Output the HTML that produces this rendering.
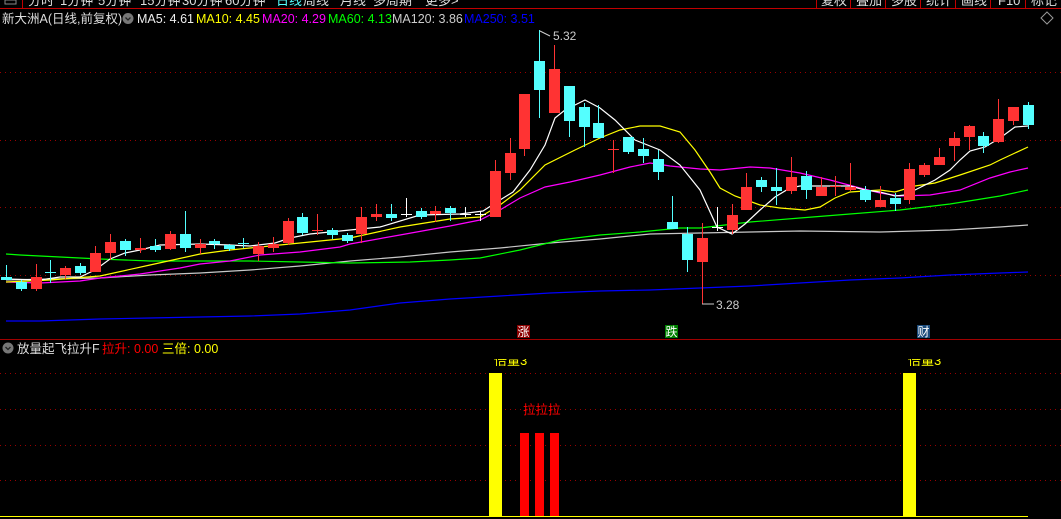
<!DOCTYPE html>
<html><head><meta charset="utf-8"><style>
html,body{margin:0;padding:0;background:#000;width:1061px;height:519px;overflow:hidden}
svg{display:block}
text{font-family:"Liberation Sans","Noto Sans CJK SC",sans-serif}
</style></head><body>
<svg width="1061" height="519" viewBox="0 0 1061 519" xmlns="http://www.w3.org/2000/svg">
<rect width="1061" height="519" fill="#000"/>
<!-- top menu -->
<g font-size="13" fill="#ddd">
<text x="28" y="5">分时</text><text x="60" y="5">1分钟</text><text x="98" y="5">5分钟</text><text x="140" y="5">15分钟</text><text x="182" y="5">30分钟</text><text x="225" y="5">60分钟</text>
<text x="276" y="5" fill="#54ffff">日线</text><text x="303" y="5">周线</text><text x="340" y="5">月线</text><text x="373" y="5">多周期</text><text x="425" y="5">更多&gt;</text>
<text x="821" y="5">复权</text><text x="856" y="5">叠加</text><text x="891" y="5">多股</text><text x="926" y="5">统计</text><text x="961" y="5">画线</text><text x="998" y="5">F10</text><text x="1031" y="5">标记</text>
</g>
<g stroke="#c00000" stroke-width="1" fill="none">
<line x1="0" y1="8.5" x2="1061" y2="8.5"/>
<line x1="22.5" y1="0" x2="22.5" y2="8"/>
<line x1="816.5" y1="0" x2="816.5" y2="8"/><line x1="850.5" y1="0" x2="850.5" y2="8"/><line x1="885.5" y1="0" x2="885.5" y2="8"/><line x1="920.5" y1="0" x2="920.5" y2="8"/><line x1="955.5" y1="0" x2="955.5" y2="8"/><line x1="990.5" y1="0" x2="990.5" y2="8"/><line x1="1025.5" y1="0" x2="1025.5" y2="8"/>
</g>
<rect x="5" y="0" width="11" height="4" fill="none" stroke="#888"/>
<!-- title line -->
<g font-size="12.5">
<text x="2" y="23" fill="#ddd">新大洲A(日线,前复权)</text>
<circle cx="128" cy="18.5" r="5.5" fill="#777"/><path d="M125.5 17.5 L128 20 L130.5 17.5" stroke="#222" stroke-width="1.3" fill="none"/>
<text x="137" y="23" fill="#eee">MA5: 4.61</text>
<text x="196" y="23" fill="#ffff00">MA10: 4.45</text>
<text x="262" y="23" fill="#ff00ff">MA20: 4.29</text>
<text x="328" y="23" fill="#00ff00">MA60: 4.13</text>
<text x="392" y="23" fill="#ccc">MA120: 3.86</text>
<text x="464" y="23" fill="#0000ff">MA250: 3.51</text>
</g>
<path d="M1047 12 L1053 18 L1047 24 L1041 18 Z" fill="none" stroke="#999"/>
<!-- grid -->
<g stroke="#900" stroke-width="1" stroke-dasharray="1,4">
<line x1="0" y1="72.5" x2="1061" y2="72.5"/><line x1="0" y1="140.5" x2="1061" y2="140.5"/><line x1="0" y1="207.5" x2="1061" y2="207.5"/><line x1="0" y1="275.5" x2="1061" y2="275.5"/>
<line x1="0" y1="373.5" x2="1061" y2="373.5"/><line x1="0" y1="409.5" x2="1061" y2="409.5"/><line x1="0" y1="445.5" x2="1061" y2="445.5"/><line x1="0" y1="480.5" x2="1061" y2="480.5"/>
</g>
<!-- MAs -->
<g fill="none" stroke-width="1.2">
<polyline stroke="#0000ff" points="6,321 40,321 100,319 150,318 200,317 250,316 300,314 350,310 400,303 450,299 500,296 550,293 600,291 650,290 700,288 750,286 800,283 850,280 900,278 950,275 1000,273 1028,272"/>
<polyline stroke="#c8c8c8" points="6,280 50,279 100,278 150,275 200,273 250,270 300,266 350,261 400,257 450,252 500,248 550,243 600,239 650,234 700,233 800,231 880,232 950,230 1000,227 1028,225"/>
<polyline stroke="#00ff00" points="6,254 20,255 40,256 60,257 100,259 150,261 250,261 300,262 350,263 410,262 450,260 480,258 520,250 560,240 600,235 640,232 680,228 700,228 750,222 800,218 850,214 900,210 950,204 1000,196 1028,190"/>
<polyline stroke="#ff00ff" points="6,282 40,283 60,282 80,281 100,278 120,276 140,274 160,271 180,268 200,264 230,261 260,255 300,252 340,247 350,244 400,235 450,226 480,220 500,210 520,198 545,187 570,182 600,175 630,167 650,163 670,166 700,169 720,170 750,167 770,168 800,173 830,180 860,188 880,193 900,196 930,195 960,190 990,178 1010,172 1028,168"/>
<polyline stroke="#ffff00" points="6,282 50,280 100,276 150,265 200,254 230,250 280,245 330,240 350,238 400,227 450,219 480,217 500,205 520,190 545,165 575,150 600,138 620,130 640,126 660,126 680,132 695,150 710,172 720,188 735,196 760,205 780,208 805,210 820,207 835,198 850,192 880,190 895,192 915,186 935,183 960,175 990,165 1000,160 1015,153 1028,147"/>
<polyline stroke="#ffffff" points="6,279 40,280 60,277 80,277 95,270 110,259 125,253 140,250 160,245 200,244 230,245 250,246 275,243 290,238 310,234 330,232 380,227 420,215 460,214 483,211 500,200 513,192 530,170 545,145 555,118 565,110 585,100 600,108 615,120 635,140 660,150 680,165 700,190 717,227 732,234 745,224 760,210 775,197 790,188 800,186 850,186 865,190 880,192 895,196 905,195 915,190 935,180 950,170 960,160 970,151 985,147 1000,138 1015,127 1028,126"/>
</g>
<!-- candles -->
<g id="candles"></g>
<!-- annotations -->
<g font-size="12" fill="#ccc">
<path d="M540 31 L550 36" stroke="#ccc"/><text x="553" y="40">5.32</text>
<path d="M702 304 L714 304" stroke="#ccc"/><text x="716" y="309">3.28</text>
</g>
<g font-size="12">
<rect x="517" y="325" width="13" height="13" fill="#8b0000"/><text x="517.5" y="336" fill="#fff">涨</text>
<rect x="665" y="325" width="13" height="13" fill="#008000"/><text x="665.5" y="336" fill="#fff">跌</text>
<rect x="917" y="325" width="13" height="13" fill="#1a4a7a"/><text x="917.5" y="336" fill="#fff">财</text>
</g>
<line x1="0" y1="339.5" x2="1061" y2="339.5" stroke="#a00000"/>
<!-- indicator -->
<circle cx="8" cy="348" r="5.5" fill="#777"/><path d="M5.5 347 L8 349.5 L10.5 347" stroke="#222" stroke-width="1.3" fill="none"/>
<g font-size="12.5">
<text x="17" y="353" fill="#ddd">放量起飞拉升F</text>
<text x="102" y="353" fill="#ff0000">拉升: 0.00</text>
<text x="162" y="353" fill="#ffff00">三倍: 0.00</text>
</g>
<svg x="0" y="359" width="1061" height="7" overflow="hidden"><g font-size="13" fill="#ffff00"><text x="494" y="6">倍量3</text><text x="908" y="6">倍量3</text></g></svg>
<text x="523" y="414" font-size="12.5" fill="#ff0000">拉拉拉</text>
<rect x="489" y="373" width="13" height="144" fill="#ffff00"/>
<rect x="903" y="373" width="13" height="144" fill="#ffff00"/>
<rect x="520" y="433" width="9" height="84" fill="#ff0000"/>
<rect x="535" y="433" width="9" height="84" fill="#ff0000"/>
<rect x="550" y="433" width="9" height="84" fill="#ff0000"/>
<line x1="0" y1="516.5" x2="1028" y2="516.5" stroke="#ffff00"/>
</svg>
<script>
var C=[
[6,277,280,265,280,'c'],[21,282,289,280,291,'c'],[36,277,289,264,291,'r'],[50,272,272,260,283,'c'],
[65,268,275,266,279,'r'],[80,266,273,263,275,'c'],[95,253,272,246,272,'r'],[110,242,253,234,260,'r'],
[125,241,250,239,256,'c'],[140,248,250,238,253,'r'],[155,246,250,239,252,'c'],[170,234,249,231,250,'r'],
[185,234,248,211,252,'c'],[200,244,248,239,254,'r'],[214,241,244,239,249,'c'],[229,245,249,244,251,'c'],
[243,243,243,238,248,'c'],[258,246,254,242,261,'r'],[273,244,248,237,252,'r'],[288,221,243,218,245,'r'],
[302,217,233,213,235,'c'],[317,230,230,214,235,'r'],[332,230,235,228,239,'c'],[347,235,241,233,243,'c'],
[361,217,234,207,243,'r'],[376,214,217,204,221,'r'],[391,214,218,204,221,'c'],[406,214,214,198,217,'w'],
[421,211,217,208,219,'c'],[435,211,214,206,222,'r'],[450,208,213,206,221,'c'],[465,214,214,207,217,'w'],
[480,214,214,211,221,'w'],[495,171,217,160,217,'r'],[510,153,173,138,180,'r'],[524,94,149,94,156,'r'],
[539,61,90,30,118,'c'],[554,69,113,45,113,'r'],[569,86,121,86,137,'c'],[584,107,127,103,147,'c'],
[598,123,138,105,138,'c'],[613,149,149,140,173,'r'],[628,137,152,137,154,'c'],[643,149,156,138,163,'c'],
[658,159,172,150,180,'c'],[672,222,229,196,229,'c'],[687,234,260,227,272,'c'],[702,238,262,223,304,'r'],
[717,227,227,207,231,'w'],[732,215,230,204,234,'r'],[746,187,210,173,210,'r'],[761,180,187,177,192,'c'],
[776,187,191,168,205,'c'],[791,177,191,157,194,'r'],[806,176,190,171,199,'c'],[821,187,196,177,196,'r'],
[835,186,186,176,196,'r'],[850,187,190,163,191,'r'],[865,190,200,186,202,'c'],[880,200,207,186,207,'r'],
[895,198,204,193,211,'c'],[909,169,200,163,204,'r'],[924,165,175,163,177,'r'],[939,157,165,148,165,'r'],
[954,138,146,132,161,'r'],[969,126,137,125,150,'r'],[983,136,146,132,153,'c'],[998,119,142,99,143,'r'],
[1013,107,121,107,125,'r'],[1028,105,125,102,129,'c']];
var col={r:'#ff3333',c:'#54ffff',w:'#ffffff'};var s='';
C.forEach(function(a){var x=a[0],k=col[a[5]];
s+='<line x1="'+(x+.5)+'" y1="'+a[3]+'" x2="'+(x+.5)+'" y2="'+a[4]+'" stroke="'+k+'"/>';
var h=a[2]-a[1];if(h<1)h=1;
s+='<rect x="'+(x-5)+'" y="'+a[1]+'" width="11" height="'+h+'" fill="'+k+'"/>';});
document.getElementById('candles').innerHTML=s;
</script>
</body></html>
